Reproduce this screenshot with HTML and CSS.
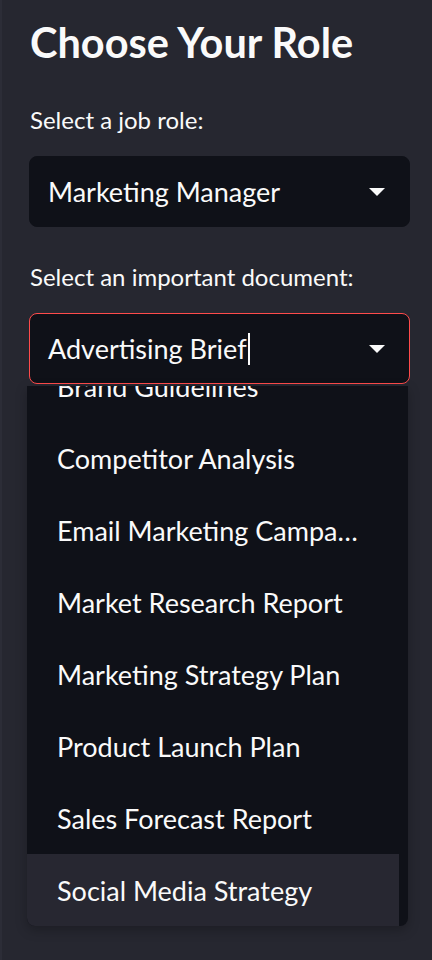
FILE: index.html
```html
<!DOCTYPE html>
<html lang="en">
<head>
<meta charset="utf-8">
<title>Choose Your Role</title>
<link rel="stylesheet" href="styles.css">
</head>
<body>
<aside class="sidebar">
  <h1 class="title">Choose Your Role</h1>

  <label class="label">Select a job role:</label>
  <div class="select">
    <span class="select-value">Marketing Manager</span>
    <svg class="caret" width="16" height="8" viewBox="0 0 16 8"><path d="M0 0H16L8 8Z" fill="#fafafa"/></svg>
  </div>

  <label class="label label-doc">Select an important document:</label>
  <div class="select select-focus">
    <span class="select-value">Advertising Brief<span class="text-cursor"></span></span>
    <svg class="caret" width="16" height="8" viewBox="0 0 16 8"><path d="M0 0H16L8 8Z" fill="#fafafa"/></svg>
  </div>

  <div class="dropdown">
    <ul class="options">
      <li class="option">Brand Guidelines</li>
      <li class="option">Competitor Analysis</li>
      <li class="option"><span class="ellipsis">Email Marketing Campaign Plan</span></li>
      <li class="option">Market Research Report</li>
      <li class="option">Marketing Strategy Plan</li>
      <li class="option">Product Launch Plan</li>
      <li class="option">Sales Forecast Report</li>
      <li class="option option-hover">Social Media Strategy</li>
    </ul>
  </div>
</aside>
</body>
</html>
```

FILE: styles.css
```css
* {
  box-sizing: border-box;
}

html, body {
  margin: 0;
  padding: 0;
  height: 100%;
}

body {
  background: #262730;
  color: #fafafa;
  font-family: "Lato", "Noto Sans", sans-serif;
}

.sidebar {
  display: flex;
  flex-direction: column;
  min-height: 100%;
  padding: 18px 22px 0 27px;
  border-left: 2px solid #2c2d37;
}

.title {
  margin: 0;
  font-size: 41.5px;
  line-height: 48px;
  font-weight: 700;
  padding-left: 1px;
}

.label {
  display: block;
  margin-top: 40px;
  font-size: 24px;
  line-height: 28px;
  padding-left: 1px;
}

.label-doc {
  margin-top: 36px;
}

.select {
  margin-top: 22px;
  height: 71px;
  background: #0f1118;
  border: 1px solid #0f1118;
  border-radius: 8px;
  display: flex;
  align-items: center;
  justify-content: space-between;
  padding: 0 24px 0 18px;
}

.select-focus {
  border-color: #ff4b4b;
}

.select-value {
  font-size: 27px;
  line-height: 32px;
  display: flex;
  align-items: center;
}

.text-cursor {
  display: inline-block;
  width: 2px;
  height: 32px;
  background: #fafafa;
  margin-left: 1px;
}

.caret {
  display: block;
}

.dropdown {
  margin-top: 2px;
  margin-left: -2px;
  width: 381px;
  height: 540px;
  overflow: hidden;
  background: #0f1118;
  border-radius: 0 0 8px 8px;
  box-shadow: 0 4px 12px rgba(0, 0, 0, 0.25);
}

.options {
  list-style: none;
  margin: -36px 0 0 0;
  padding: 0;
  width: 372px;
}

.option {
  height: 72px;
  display: flex;
  align-items: center;
  padding-left: 30px;
  font-size: 27px;
  white-space: nowrap;
}

.ellipsis {
  display: block;
  max-width: 302px;
  overflow: hidden;
  text-overflow: ellipsis;
}

.option-hover {
  background: #272731;
}
```
